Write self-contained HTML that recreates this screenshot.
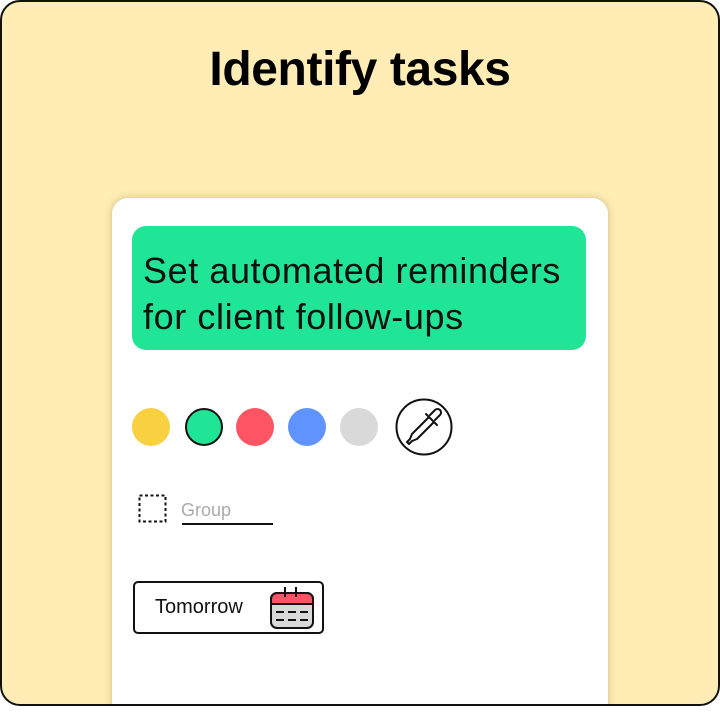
<!DOCTYPE html>
<html><head><style>
*{margin:0;padding:0;box-sizing:border-box}
body{width:720px;height:714px;background:#fff;font-family:"Liberation Sans",sans-serif;position:relative;overflow:hidden}
.outer{position:absolute;left:0;top:0;width:720px;height:706px;background:#FFEDB5;border:2px solid #111;border-radius:20px;overflow:hidden}
h1{position:absolute;left:0;width:716px;top:40px;text-align:center;font-size:48px;font-weight:bold;letter-spacing:-0.4px;color:#000}
.card{position:absolute;left:110px;top:196px;width:496px;height:540px;background:#fff;border-radius:16px;box-shadow:0 0 8px rgba(120,100,40,.35)}
.green{position:absolute;left:20px;top:28px;width:454px;height:124px;background:#20E496;border-radius:14px;padding:22px 0 0 11px;font-size:36px;line-height:46px;letter-spacing:0.6px;color:#111;white-space:nowrap}
.c{position:absolute;top:210px;width:38px;height:38px;border-radius:50%}
</style></head><body>
<div class="outer">
<h1>Identify tasks</h1>
<div class="card">
<div class="green">Set automated reminders<br>for client follow-ups</div>
<div class="c" style="left:20px;background:#F9D03F"></div>
<div class="c" style="left:73px;background:#20E496;border:2px solid #111"></div>
<div class="c" style="left:124px;background:#FF5463"></div>
<div class="c" style="left:176px;background:#5F93FF"></div>
<div class="c" style="left:228px;background:#D9D9D9"></div>
<svg style="position:absolute;left:283px;top:200px" width="58" height="58" viewBox="0 0 58 58">
<circle cx="29" cy="29" r="27.5" fill="#fff" stroke="#111" stroke-width="2"/>
<g fill="none" stroke="#111" stroke-width="2" stroke-linejoin="round" stroke-linecap="round">
<path d="M35 17 l5-5 a3.5 3.5 0 0 1 5 5 l-5 5"/>
<path d="M31 16 l11 11"/>
<path d="M34 19 l-17 17 l-2 5 l-3 3 l2 2 l3-3 l5-2 l17-17"/>
</g></svg>
<svg style="position:absolute;left:26px;top:296px" width="30" height="30" viewBox="0 0 30 30">
<rect x="1.5" y="1.5" width="26" height="26" fill="none" stroke="#111" stroke-width="2" stroke-dasharray="3 2.5"/>
</svg>
<div style="position:absolute;left:69px;top:302px;font-size:18px;color:#aaa">Group</div>
<div style="position:absolute;left:70px;top:325px;width:91px;height:2px;background:#111"></div>
<div style="position:absolute;left:21px;top:383px;width:191px;height:53px;border:2px solid #111;border-radius:5px">
<div style="position:absolute;left:20px;top:13px;font-size:20px;color:#111">Tomorrow</div>
<svg style="position:absolute;left:134px;top:2px" width="46" height="46" viewBox="0 0 46 46">
<rect x="2" y="8" width="42" height="35" rx="6" fill="#D9D9D9" stroke="#111" stroke-width="2"/>
<path d="M2 19 V14 a6 6 0 0 1 6-6 h30 a6 6 0 0 1 6 6 v5z" fill="#FF5463" stroke="#111" stroke-width="2"/>
<path d="M16 2v10M27 2v10" stroke="#111" stroke-width="2"/>
<path d="M7 27h8M19 27h8M31 27h8M7 35h8M19 35h8M31 35h8" stroke="#111" stroke-width="2"/>
</svg>
</div>
</div>
</div>
</body></html>
